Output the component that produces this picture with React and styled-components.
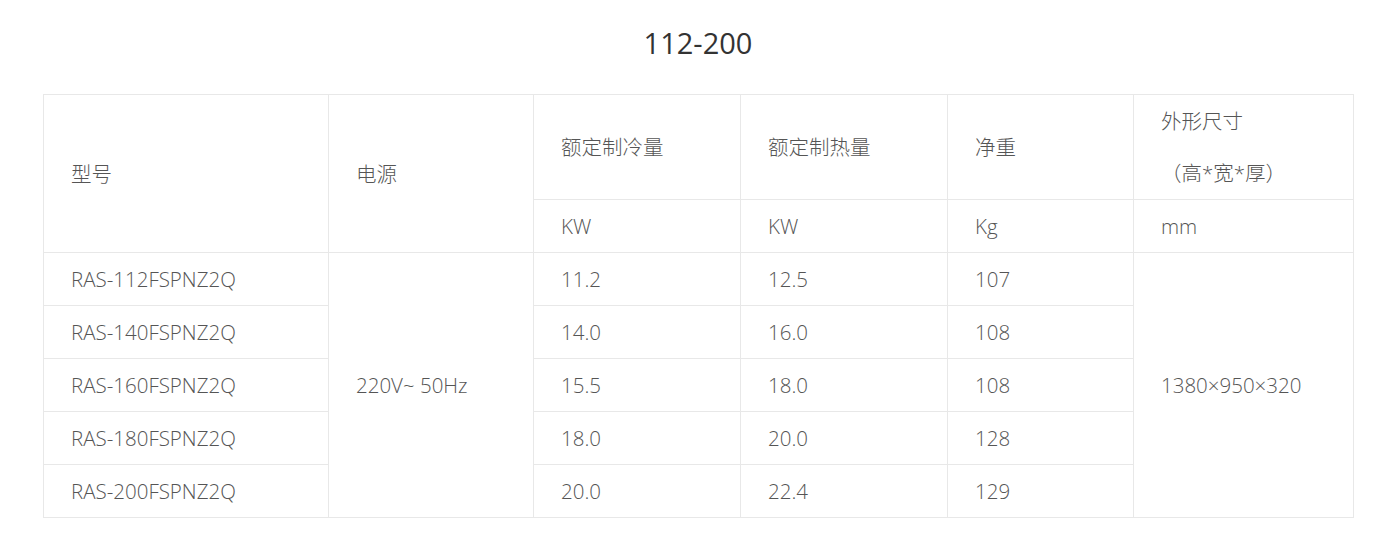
import React from "react"
import styled, { createGlobalStyle } from "styled-components"

const GlobalStyle = createGlobalStyle`
  body {
    margin: 0;
    background: #fff;
    font-family: "Open Sans", "Noto Sans CJK SC", sans-serif;
  }
`

const Wrapper = styled.div`
  width: 1310px;
  margin-left: 43px;
`

const Title = styled.h2`
  margin: 0;
  height: 94px;
  padding-top: 24px;
  box-sizing: border-box;
  text-align: center;
  font-size: 29px;
  font-weight: 400;
  line-height: 38px;
  color: #333;
`

const Table = styled.table`
  width: 100%;
  border-collapse: collapse;
  table-layout: fixed;
  color: #555;
  font-size: 20.5px;
  font-weight: 300;
`

const Cell = styled.td`
  border: 1px solid #e8e8e8;
  padding: 0 27px;
  height: ${(p) => (p.$tall ? "104px" : "52px")};
  vertical-align: middle;
  text-align: left;
  font-weight: 300;
  line-height: ${(p) => (p.$lines ? "52px" : "26px")};
  white-space: nowrap;
`

const columns = [285, 205, 207, 207, 186, 220]

const rows = [
  ["RAS-112FSPNZ2Q", "11.2", "12.5", "107"],
  ["RAS-140FSPNZ2Q", "14.0", "16.0", "108"],
  ["RAS-160FSPNZ2Q", "15.5", "18.0", "108"],
  ["RAS-180FSPNZ2Q", "18.0", "20.0", "128"],
  ["RAS-200FSPNZ2Q", "20.0", "22.4", "129"],
]

const App = () => {
  return (
    <>
      <GlobalStyle />
      <Wrapper>
        <Title>112-200</Title>
        <Table>
          <colgroup>
            {columns.map((w, i) => (
              <col key={i} style={{ width: w }} />
            ))}
          </colgroup>
          <thead>
            <tr>
              <Cell as="th" rowSpan={2}>型号</Cell>
              <Cell as="th" rowSpan={2}>电源</Cell>
              <Cell as="th" $tall>额定制冷量</Cell>
              <Cell as="th" $tall>额定制热量</Cell>
              <Cell as="th" $tall>净重</Cell>
              <Cell as="th" $tall $lines>
                外形尺寸
                <br />
                （高*宽*厚）
              </Cell>
            </tr>
            <tr>
              <Cell>KW</Cell>
              <Cell>KW</Cell>
              <Cell>Kg</Cell>
              <Cell>mm</Cell>
            </tr>
          </thead>
          <tbody>
            {rows.map((r, i) => (
              <tr key={r[0]}>
                <Cell>{r[0]}</Cell>
                {i === 0 && <Cell rowSpan={5}>220V~ 50Hz</Cell>}
                <Cell>{r[1]}</Cell>
                <Cell>{r[2]}</Cell>
                <Cell>{r[3]}</Cell>
                {i === 0 && <Cell rowSpan={5}>1380×950×320</Cell>}
              </tr>
            ))}
          </tbody>
        </Table>
      </Wrapper>
    </>
  )
}

export default App
